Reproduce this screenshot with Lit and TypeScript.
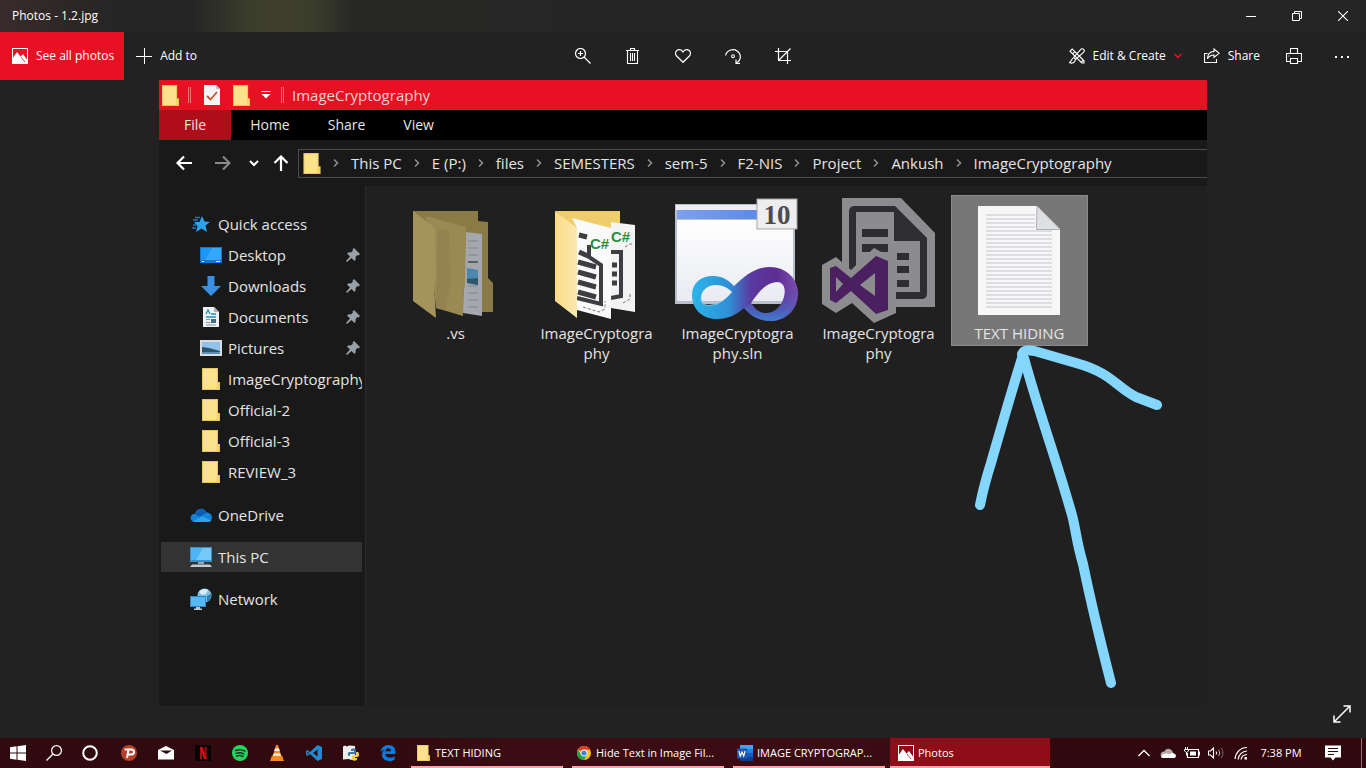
import { LitElement, html, css, svg, nothing, TemplateResult } from "lit";
import { customElement } from "lit/decorators.js";
import { classMap } from "lit/directives/class-map.js";

const icon = (w: number, h: number, body: unknown) =>
  html`<svg width=${w} height=${h} viewBox="0 0 ${w} ${h}" fill="none" aria-hidden="true">${body}</svg>`;

const line = (d: string, width = 1, color = "#fff") =>
  svg`<path d=${d} stroke=${color} stroke-width=${width} />`;

/* ---------- viewer glyphs ---------- */

const photosGlyph = icon(16, 16, svg`
  <rect x="0.5" y="0.5" width="15" height="15" stroke="#fff" />
  <path d="M0 11 L5 4 L8.5 8.5 L11 6 L16 13 V16 H0 Z" fill="#fff" />
  <path d="M9 9 L13 14" stroke="#e81123" stroke-width="0.8" />`);

const plusGlyph = icon(16, 16, line("M0 8.5H16M8.5 0V16", 1));

const zoomGlyph = icon(16, 16, svg`
  <circle cx="5.5" cy="5.5" r="5" stroke="#fff" stroke-width="1.2" />
  ${line("M3 5.5H8M5.5 3V8", 1.2)}${line("M9 9L15.5 15.5", 1.3)}`);

const trashGlyph = icon(16, 16, svg`
  ${line("M1 2.5H14M5.5 2.5V0.5H9.5V2.5M2.5 2.5V15.5H12.5V2.5M5.5 5V13M7.5 5V13M9.5 5V13", 1.1)}`);

const heartGlyph = icon(16, 16, svg`
  <path d="M8 14.3 L1.6 8 C-0.4 5.6 0.6 2.2 3.6 1.6 C5.6 1.3 7.2 2.4 8 4 C8.8 2.4 10.4 1.3 12.4 1.6 C15.4 2.2 16.4 5.6 14.4 8 Z" stroke="#fff" stroke-width="1.2" />`);

const rotateGlyph = icon(16, 16, svg`
  ${line("M0.6 7.5A7.4 7 0 1 1 11.5 14.8", 1.2)}
  ${line("M11 11.5V15.4H15", 1.2)}
  <circle cx="8" cy="8.2" r="1.4" stroke="#fff" stroke-width="1.1" />`);

const cropGlyph = icon(16, 16, svg`
  ${line("M0 3.5H12.5V16M3.5 0V12.5H16M4 12L15.5 0.5", 1.2)}`);

const editGlyph = icon(16, 16, svg`
  ${line("M1 3.2L3.2 1L15 12.8V15H12.8Z M3.6 5.8L5.8 3.6M12 14.5L14.5 12", 1.1)}
  ${line("M14.6 1.4C13.6 0.4 12.4 0.8 11.6 1.6L4.6 9.4L6.6 11.4L14.4 4.4C15.2 3.6 15.6 2.4 14.6 1.4Z", 1.1)}
  ${line("M4.4 10C2.6 10.2 2.6 13.6 0.4 14.6C3 15.8 6.2 14.6 6.2 11.8", 1.1)}`);

const caretGlyph = icon(8, 8, line("M0.5 2L4 5.5L7.5 2", 1.5, "#e81123"));

const shareGlyph = icon(16, 16, svg`
  ${line("M3.5 5.5H0.5V14.5H12.5V11", 1.1)}
  ${line("M10 1L15.2 5.2L10 9.4V7C7 7 5 8.2 3.4 10.8C3.6 6.6 6.2 3.6 10 3.4Z", 1.1)}`);

const printGlyph = icon(16, 16, svg`
  ${line("M4.5 5.5V0.5H11.5V5.5M4 13.5H0.5V5.5H15.5V13.5H12M4.5 10.5H11.5V15.5H4.5Z", 1.1)}
  <rect x="2.5" y="7.5" width="1" height="1" fill="#fff" />`);

const dotsGlyph = icon(16, 16, svg`
  <path d="M1 8h2v2H1zM7 8h2v2H7zM13 8h2v2h-2z" fill="#fff" />`);

const minGlyph = icon(10, 10, line("M0 5.5H10"));
const restoreGlyph = icon(10, 10, line("M0.5 2.5H7.5V9.5H0.5ZM2.5 2.5V0.5H9.5V7.5H7.5"));
const closeGlyph = icon(10, 10, line("M0 0L10 10M10 0L0 10", 1.1));
const expandGlyph = icon(18, 18, line("M1 17L17 1M10.5 1H17V7.5M1 10.5V17H7.5", 1.5));

/* ---------- explorer glyphs ---------- */

const folderGlyph = (w = 18, h = 22) => html`
  <svg width=${w} height=${h} viewBox="0 0 18 22" aria-hidden="true">
    <path d="M0 0H16V14H18V22H0Z" fill="#e9c45a" />
    <path d="M1 1H15V21H1Z" fill="#fde28d" />
    <path d="M15 15H17V21H14Z" fill="#f5d573" />
  </svg>`;

const checkDocGlyph = icon(16, 20, svg`
  <path d="M0 0H12L16 4V20H0Z" fill="#f4f4f6" /><path d="M12 0V4H16Z" fill="#b9b9c2" />
  <path d="M3 11L6.500 14.500L13 7" stroke="#c4552d" stroke-width="1.800" />`);

const menuMarkGlyph = icon(10, 8, svg`<path d="M0.500 0.500H9.500" stroke="#fff" /><path d="M0.500 3H9.500L5 7.500Z" fill="#fff" />`);
const backGlyph = icon(16, 16, line("M16 8H1.500M8 1.500L1.500 8L8 14.500", 2.2));
const forwardGlyph = icon(16, 16, line("M0 8H14.500M8 1.500L14.500 8L8 14.500", 2, "#8b8b8b"));
const downGlyph = icon(10, 8, line("M1 2L5 6L9 2", 2));
const upGlyph = icon(16, 16, line("M8 16V1.500M1.500 8L8 1.500L14.500 8", 2.2));
const crumbGlyph = icon(6, 10, line("M1 1.500L4.500 5L1 8.500", 1.600, "#8d8d8d"));

const starGlyph = icon(22, 20, svg`
  <path d="M12 2L14.500 7.500L20 8L15.500 11.500L17 18L11.500 14.500L6 18L7.500 12L4 8H9.500Z" fill="#2fa4ee" />
  <path d="M5 3.500H10M3 6H8M2 14H6M3 11H7" stroke="#1c79b9" stroke-width="1.300" />`);
const desktopGlyph = icon(22, 16, svg`
  <rect width="22" height="16" fill="#1277cf" /><rect x="1" y="1" width="20" height="12" fill="#1a97f6" />
  <path d="M12 1H21V13H5Z" fill="#36a7fa" /><path d="M2 14.500H4M16 14.500H20" stroke="#e6f4ff" />`);
const downloadsGlyph = icon(20, 20, svg`
  <path d="M6.500 0H13.500V10H20L10 20L0 10H6.500Z" fill="#3a8fe0" />`);
const documentsGlyph = icon(16, 20, svg`
  <path d="M0 0H11L16 5V20H0Z" fill="#eef2f4" /><path d="M11 0V5H16Z" fill="#a9b3b8" />
  <path d="M3 7L5 3L7 7M8 7H13M3 10H13" stroke="#2391b8" stroke-width="1.300" />
  <rect x="8" y="12" width="5" height="4" fill="#3d6f8c" /><path d="M3 12.500H7M3 15.500H7M3 18H13" stroke="#8497a1" />`);
const picturesGlyph = icon(22, 16, svg`
  <rect width="22" height="16" fill="#d9dde0" /><rect x="2" y="2" width="18" height="12" fill="#8fc3ee" />
  <path d="M2 7L9 8L20 11V14H2Z" fill="#2c5568" /><path d="M2 12H20V14H2Z" fill="#5f8fb4" />`);
const onedriveGlyph = icon(22, 14, svg`
  <path d="M5 14C1 14-0.500 10 1.500 7.500C2.500 6 4 5.800 5 6C6 1 13-2 16.500 4.500C20 4.500 22 7 22 9.500C22 12 20 14 18 14Z" fill="#1583d8" />
  <path d="M5 6C6.500 1 13-1.500 16.500 4.500L10 9Z" fill="#0b5db4" />
  <path d="M3 13.500L12 8L21 12.500C20 13.600 19 14 18 14H5Z" fill="#2ba3ea" />`);
const pcGlyph = icon(22, 20, svg`
  <rect y="0" width="22" height="15" fill="#3e8fc6" /><rect x="1" y="1" width="20" height="12" fill="#4ab5f8" />
  <path d="M13 1H21V13H6Z" fill="#74c9fb" /><path d="M8 15H14V17H8Z" fill="#8fa6b3" /><path d="M2 17.500H20L22 20H0Z" fill="#c2cdd3" />`);
const networkGlyph = icon(22, 22, svg`
  <circle cx="14.500" cy="7.500" r="7" fill="#7fbfe0" /><path d="M9 4C11 1 16 0 18 2L16 6L12 7Z" fill="#d6edf7" />
  <path d="M17 8L21 6C21 11 19 13 17 14Z" fill="#2f7aa8" />
  <rect y="8" width="16" height="11" fill="#2c84c4" /><rect x="1" y="9" width="14" height="9" fill="#56b9f5" />
  <path d="M6 19H10V20.500H12V22H4V20.500H6Z" fill="#b8c6ce" />`);
const pinGlyph = icon(14, 14, svg`
  <path d="M8 0L14 6L12.500 7.500L11.500 7L9.500 9C10 10.500 9.500 12 8.500 13L5.500 10L1 14L0 13L4 8.500L1 5.500C2 4.500 3.500 4 5 4.500L7 2.500L6.500 1.500Z" fill="#9aa1a6" />`);

/* ---------- large file icons ---------- */

const vsFolder = icon(128, 128, svg`
  <path d="M21 16H86V26L96 27V83L101 88V117H70L40 60Z" fill="#8a7a45" />
  <path d="M74 37L90 39V121L71 118Z" fill="#a4a8ac" />
  <path d="M76 46H86M76 53H86M76 60H86M76 91H86M76 98H86M76 105H86M76 112H86" stroke="#7d8790" />
  <path d="M76 67H86" stroke="#3a4a52" stroke-width="1.500" />
  <path d="M75 73L86 75V90L75 88Z" fill="#4b88ab" /><path d="M75 84L86 83V90L75 88Z" fill="#2f566d" />
  <path d="M34 21L74 32L73 92L71 94V121L44 113Z" fill="#9b8953" />
  <path d="M46 33L57 36L58 90L53 115L44 113Z" fill="#948350" />
  <path d="M21 16L43 33L44 85L42 90L44 123L21 106Z" fill="#a4945c" />`);

const csFolder = icon(128, 128, svg`
  <defs><linearGradient id="flap"><stop stop-color="#fbdc86" /><stop offset="1" stop-color="#fce9b0" /></linearGradient></defs>
  <path d="M22 16H87V40H50Z" fill="#f0cd6b" />
  <path d="M78 27L102 30V117L78 113Z" fill="#f3f3f3" />
  <path d="M78 57H88V101L78 103" stroke="#3e3e42" stroke-width="4" />
  <path d="M79 70H84M79 79H84M79 88H84" stroke="#3e3e42" stroke-width="5" />
  <path d="M90 108L97 104V99M92 52L97 49H101" stroke="#777" stroke-dasharray="3 2" />
  <path d="M39 23L78 33V124L44 115V33Z" fill="#fafafa" />
  <path d="M46 40L54 42M46 57L55 61" stroke="#3e3e42" stroke-width="5" />
  <path d="M45 67L63 72M45 77L63 82M45 87L63 92M45 97L63 102" stroke="#3e3e42" stroke-width="5" />
  <path d="M44 103L68 109V70L56 62V50" stroke="#3e3e42" stroke-width="4" />
  <path d="M50 112L66 117L72 114V106" stroke="#777" stroke-dasharray="3 2" />
  <text x="57" y="54" class="cs">C#</text>
  <text x="78" y="47" class="cs">C#</text>
  <path d="M22 16L44 33V123L22 106Z" fill="url(#flap)" />`);

const slnIcon = icon(128, 128, svg`
  <defs>
    <linearGradient id="loop"><stop stop-color="#2cb5ea" /><stop offset="0.350" stop-color="#2f8fd6" />
      <stop offset="0.550" stop-color="#5a3aa0" /><stop offset="0.800" stop-color="#5e2d91" /><stop offset="1" stop-color="#7d4fb4" /></linearGradient>
    <linearGradient id="under" x1="0" y1="0" x2="0" y2="1"><stop stop-color="#5a3aa0" stop-opacity="0" /><stop offset="1" stop-color="#3f7fd0" /></linearGradient>
    <linearGradient id="bar"><stop stop-color="#7da0ee" /><stop offset="1" stop-color="#4f7fe8" /></linearGradient>
    <linearGradient id="pane" x1="0" y1="0" x2="0" y2="1"><stop stop-color="#fff" /><stop offset="1" stop-color="#e9ebf1" /></linearGradient>
  </defs>
  <rect x="1" y="9" width="120" height="100" fill="#b9bfca" />
  <rect x="2" y="10" width="118" height="5" fill="#eceef3" />
  <rect x="3" y="15" width="116" height="9" fill="url(#bar)" />
  <rect x="3" y="25" width="116" height="81" fill="url(#pane)" />
  <rect x="83" y="4" width="40" height="30" fill="#eeeeef" stroke="#a5a5a8" />
  <text x="103" y="29" class="ten">10</text>
  <path fill-rule="evenodd" fill="url(#loop)" d="M18 100C18 88 27 81 39 81C50 81 56 87 60 91C70 82 80 72 96 72C112 72 124 84 124 98C124 115 112 126 97 126C84 126 76 120 70 113C62 120 54 124 43 124C28 124 18 114 18 100Z
    M27 103C27 110 32 111 38 110C46 109 53 103 58 97C54 93 49 90 42 90C33 90 27 96 27 103Z
    M77 108C80 112 83 117 90 118C100 119 107 112 110 102C112 94 110 88 104 87C92 87 84 98 77 108Z" />
  <path d="M70 113L77 108C80 112 83 117 90 118C100 119 107 112 110 102L112 92L122 88C128 108 114 126 97 126C84 126 76 120 70 113Z" fill="url(#under)" />
  <path d="M27 103C27 110 32 111 38 110C42 110 45 108 48 106" stroke="#7fd0f2" stroke-width="1" />`);

const vsFile = icon(128, 128, svg`
  <path d="M27 3H86L120 38V112H60L27 80Z" fill="#8c8c8e" />
  <path d="M40 11H80L112 43V98C112 102 110 104 106 104H79L34 76V17C34 13 36 11 40 11Z" fill="#2e2e30" />
  <path d="M41 17H79V46H105V97H79L41 76Z" fill="#8c8c8e" />
  <path d="M47 34H73V42H47ZM47 49H73V57H47ZM82 58H94V65H82ZM82 71H94V78H82ZM82 85H94V92H82Z" fill="#2e2e30" />
  <path d="M59 53L81 65V118L59 128L37 108L21 118L7 109V70L21 62L36 75Z" fill="#8c8c8e" />
  <path fill-rule="evenodd" fill="#4b2061" d="M15 73L21 71L36 83L61 61L73 66V115L61 119L36 96L21 108L15 105ZM21 82V97L28 89ZM60 78L45 90L60 101Z" />`);

const textFile = icon(128, 128, svg`
  <path d="M22 11H81L104 34V120H22Z" fill="#f7f7f8" />
  ${Array.from({ length: 24 }, (_, i) => {
    const y = 20 + i * 4;
    return y > 112 ? nothing : svg`<path d="M30 ${y}H${y < 36 ? 79 : 96}" stroke="#d3d6da" stroke-width="1.500" />`;
  })}
  <path d="M81 11L104 34.500H80.500Z" fill="#dfe0e2" stroke="#aeb0b3" />`);

/* ---------- taskbar glyphs ---------- */

const startGlyph = icon(16, 16, svg`<path d="M0 2.200L6.500 1.300V7.500H0ZM7.500 1.200L16 0V7.500H7.500ZM0 8.500H6.500V14.700L0 13.800ZM7.500 8.500H16V16L7.500 14.800Z" fill="#fff" />`);
const searchGlyph = icon(16, 16, svg`<circle cx="10.500" cy="5.500" r="4.900" stroke="#fff" stroke-width="1.200" />${line("M7 9L0.5 15.500", 1.3)}`);
const cortanaGlyph = icon(16, 16, svg`<circle cx="8" cy="8" r="6.800" stroke="#fff" stroke-width="2" />`);
const pGlyph = icon(16, 16, svg`<circle cx="8" cy="8" r="8" fill="#b5402a" /><path d="M3.500 4.500H10.500A2.300 2.300 0 0 1 10.500 9.500H7M7.500 4.500L6 13" stroke="#fff" stroke-width="2" />`);
const mailGlyph = icon(16, 16, svg`<path d="M0 5L8 1L16 5V14.500H0Z" fill="#fff" /><path d="M2 5.500H14L8.500 9Z" fill="#300a0f" />`);
const netflixGlyph = icon(16, 16, svg`<rect width="16" height="16" fill="#060606" /><path d="M6 2V14M10.500 2V14" stroke="#b00710" stroke-width="2" /><path d="M5 2H7.500L11.500 14H9Z" fill="#e50914" />`);
const spotifyGlyph = icon(16, 16, svg`<circle cx="8" cy="8" r="8" fill="#1ed760" /><path d="M3.500 5.500C7 4.300 10.500 4.800 13 6.200M4 8.300C7 7.400 9.800 7.800 12 9M4.500 11C7 10.200 9 10.500 11 11.500" stroke="#16301d" stroke-width="1.400" stroke-linecap="round" />`);
const vlcGlyph = icon(16, 16, svg`<path d="M3 10.500H13L15 16H1Z" fill="#f58a1f" /><path d="M7 0H9L12.500 12H3.500Z" fill="#f58a1f" /><path d="M6 3.500H10L10.800 6H5.200ZM4.600 8.500H11.400L12 10.800H4Z" fill="#f2f2f2" />`);
const codeGlyph = icon(16, 16, svg`<path d="M11.500 0L16 2V14L11.500 16L4 9L1.500 11L0 10V6L1.500 5L4 7Z" fill="#1f8ad2" /><path d="M11.500 4.500V11.500L7 8ZM1.500 6.500V9.500L3 8Z" fill="#300a0f" />`);
const pythonGlyph = icon(16, 16, svg`<path d="M0 1.500L2 0.500L4 1.500L6 0.500L12 1V15L10 14L8 15L6 14L0 14.500Z" fill="#ededed" /><path d="M6 6H11V7H6C4.500 7 4.500 11 6 11H7V9H11C12.500 9 13 8 13 6V4.500C13 3 8 3 8 4.500V6" fill="#3b77a8" /><path d="M13 7H14.500C16.500 7 16.500 12 14.500 12H11.500V13H14V14.500C14 16 9 16 9 14.500V11.500C9 10.500 10 10 11 10H12.500C13 10 13 9 13 7Z" fill="#f6cf46" />`);
const edgeGlyph = icon(16, 16, svg`<path d="M0.500 7.500C1 3 4 0 8.500 0C13 0 15.500 3.200 15.500 7V9H5.300C5.500 11.500 7.500 12.700 10 12.700C12 12.700 13.500 12.200 14.600 11.500V14.800C13 15.700 11.300 16 9.300 16C5 16 2 13.500 2 9.800C2 7.500 3.200 5.600 5 4.600C3 5 1.500 6 0.500 7.500ZM5.400 6.200H11C11 4.300 10 3.200 8.300 3.200C6.700 3.200 5.600 4.500 5.400 6.200Z" fill="#0a7be0" />`);
const chromeGlyph = icon(16, 16, svg`<circle cx="8" cy="8" r="7" fill="#fbc116" /><path d="M8 8L2 4.300A7 7 0 0 1 14.200 4.800H8Z" fill="#e33b2e" /><path d="M8 8L8 15A7 7 0 0 1 1.900 4.500L5 9.700Z" fill="#1fa34f" /><path d="M11 9.500L8 15L7.500 15L6 10.500Z" fill="#1fa34f" /><circle cx="8" cy="8" r="3.400" fill="#fff" /><circle cx="8" cy="8" r="2.600" fill="#3f82ee" />`);
const wordGlyph = icon(16, 16, svg`<rect x="3" width="13" height="16" rx="1" fill="#2b7cd3" /><rect x="3" width="13" height="4" fill="#41a5ee" /><rect x="3" y="8" width="13" height="4" fill="#185abd" /><rect x="3" y="12" width="13" height="4" fill="#103f91" /><rect y="3.500" width="10" height="10" fill="#1d55b4" /><path d="M1.800 6L3.300 11L5 7L6.700 11L8.200 6" stroke="#fff" stroke-width="1.200" />`);
const chevronUpGlyph = icon(12, 8, line("M0.5 7L6 1.500L11.500 7", 1.3));
const cloudGlyph = icon(16, 12, svg`<path d="M4 11H13C16.500 11 17 7 13.500 6.500C12 1 6 0 4.500 4.500C0 4 -1 10.500 4 11Z" fill="#b9a9ab" /><path d="M3.500 11H13C16.500 11 17 7.500 13.500 6.500C11 6 10 7 9 7.500C6 5 1.500 7.500 1 10C1.500 10.700 2.500 11 3.500 11Z" fill="#fff" />`);
const batteryGlyph = icon(16, 12, svg`${line("M5 2.500H14.500V10.500H3.500V6M14.500 5H15.500V8H14.500", 1.1)}<rect x="6" y="4.500" width="6" height="4" fill="#fff" />${line("M1.500 0V2M3.500 0V2M0.500 2.500H4.500V4L2.500 5.500L0.500 4V2.500M2.500 5V8.500", 1)}`);
const volumeGlyph = icon(16, 12, svg`${line("M0.5 4V8H2.500L5.500 11V1L2.500 4Z", 1.1)}${line("M8 4.500C8.800 5.400 8.800 6.600 8 7.500", 1.1)}${line("M10.5 3C12 4.800 12 7.200 10.500 9", 1, "#cbbcbd")}${line("M13 1C15.500 4 15.500 8 13 11", 1, "#88686c")}`);
const wifiGlyph = icon(14, 14, svg`${line("M1 13C1.500 6.500 6.500 1.500 13 1.500", 1.2)}${line("M4 13.500C4.500 9 8 5.200 13 5", 1.2)}${line("M7 13.500C7.500 10.500 9.500 8.700 13 8.500", 1.2)}<rect x="10.500" y="11" width="2.500" height="2.500" fill="#fff" />`);
const noticeGlyph = icon(16, 16, svg`<path d="M0 0.500H16V12.500H10.500L8 15.500L5.500 12.500H0Z" fill="#fff" /><path d="M3 3.500H13M3 6.500H13M3 9.500H9" stroke="#300a0f" />`);

interface Place { label: string; glyph: TemplateResult; pinned?: boolean; child?: boolean; current?: boolean }
interface FileItem { lines: string[]; art: TemplateResult; selected?: boolean }

const quickAccess: Place[] = [
  { label: "Quick access", glyph: starGlyph },
  { label: "Desktop", glyph: desktopGlyph, pinned: true, child: true },
  { label: "Downloads", glyph: downloadsGlyph, pinned: true, child: true },
  { label: "Documents", glyph: documentsGlyph, pinned: true, child: true },
  { label: "Pictures", glyph: picturesGlyph, pinned: true, child: true },
  { label: "ImageCryptography", glyph: folderGlyph(), child: true },
  { label: "Official-2", glyph: folderGlyph(), child: true },
  { label: "Official-3", glyph: folderGlyph(), child: true },
  { label: "REVIEW_3", glyph: folderGlyph(), child: true },
];

const roots: Place[] = [
  { label: "OneDrive", glyph: onedriveGlyph },
  { label: "This PC", glyph: pcGlyph, current: true },
  { label: "Network", glyph: networkGlyph },
];

const crumbs = ["This PC", "E (P:)", "files", "SEMESTERS", "sem-5", "F2-NIS", "Project", "Ankush", "ImageCryptography"];

const files: FileItem[] = [
  { lines: [".vs"], art: vsFolder },
  { lines: ["ImageCryptogra", "phy"], art: csFolder },
  { lines: ["ImageCryptogra", "phy.sln"], art: slnIcon },
  { lines: ["ImageCryptogra", "phy"], art: vsFile },
  { lines: ["TEXT HIDING"], art: textFile, selected: true },
];

@customElement("explorer-shot")
class ExplorerShot extends LitElement {
  static styles = css`
    :host { display: block; position: relative; background: #202020; color: #e4e4e4; font: 15px/20px "Open Sans", "Noto Sans", sans-serif; }
    button { border: 0; padding: 0; margin: 0; background: none; color: inherit; font: inherit; white-space: nowrap; }
    a { color: inherit; text-decoration: none; }
    svg { display: block; flex: none; }
    .title { display: flex; align-items: center; height: 30px; padding-left: 3px; background: #e81123; color: #f7cfd2; }
    .title .rule { width: 1px; height: 16px; border: solid #f0747d; border-width: 0 1px; margin: 0 13px 0 9px; }
    .title .rule.end { margin: 0 8px 0 10px; }
    .title .folder { margin: 0 11px 0 13px; }
    .tabs { display: flex; height: 30px; background: #000; font-size: 14px; }
    .tabs button { padding: 0 19px; }
    .tabs .file { padding: 0 25px; background: #b00d1b; }
    .nav { display: flex; align-items: center; height: 46px; padding-left: 6px; background: #191919; }
    .nav > button { display: grid; place-items: center; height: 30px; width: 38px; margin-right: 1px; }
    .nav > .slim { width: 21px; }
    .nav > .up { width: 32px; }
    .path { flex: 1; min-width: 0; display: flex; align-items: center; gap: 12px; height: 27px; padding-left: 4px; overflow: hidden; border: 1px solid #4c4c4c; border-right: 0; }
    .body { display: flex; min-height: 520px; }
    .side { flex: none; box-sizing: border-box; width: 207px; padding: 22px 3px 0 2px; display: flex; flex-direction: column; gap: 12px; background: #191919; border-right: 1px solid #2b2b2b; }
    .group { display: flex; flex-direction: column; padding-bottom: 1px; }
    .row { display: flex; align-items: center; height: 30px; padding-left: 29px; gap: 6px; white-space: nowrap; }
    .group .row { height: 31px; }
    .row.child { padding-left: 39px; }
    .row.current { background: #333; }
    .slot { display: grid; place-items: center; width: 22px; flex: none; }
    .name { flex: 1; min-width: 0; overflow: hidden; }
    .row .pin { margin-right: 2px; }
    .files { flex: 1; display: flex; flex-wrap: wrap; align-items: flex-start; align-content: flex-start; gap: 4px; padding: 9px 0 0 21px; }
    .item { display: flex; flex-direction: column; align-items: center; width: 137px; height: 151px; }
    .item.selected { background: #777; box-shadow: inset 0 0 0 1px #8a8a8a; }
    .cs { font: 700 15px "Liberation Sans", sans-serif; fill: #2c8f3d; }
    .ten { font: 700 27px "Liberation Serif", serif; fill: #4c4c50; text-anchor: middle; }
    .ink { position: absolute; inset: 0; pointer-events: none; }
  `;

  private place = (p: Place) => html`
    <a href="#" class=${classMap({ row: true, child: !!p.child, current: !!p.current })}>
      <span class="slot">${p.glyph}</span><span class="name">${p.label}</span>
      ${p.pinned ? html`<span class="pin">${pinGlyph}</span>` : nothing}
    </a>`;

  render() {
    return html`
      <div class="title">
        ${folderGlyph(17, 21)}<span class="rule"></span>${checkDocGlyph}
        <span class="folder">${folderGlyph(17, 21)}</span>${menuMarkGlyph}
        <span class="rule end"></span><span>ImageCryptography</span>
      </div>
      <div class="tabs">
        <button class="file">File</button><button>Home</button><button>Share</button><button>View</button>
      </div>
      <div class="nav">
        <button aria-label="Back">${backGlyph}</button>
        <button aria-label="Forward">${forwardGlyph}</button>
        <button class="slim" aria-label="Recent locations">${downGlyph}</button>
        <button class="up" aria-label="Up">${upGlyph}</button>
        <div class="path">
          ${folderGlyph(18, 21)}
          ${crumbs.map((c) => html`${crumbGlyph}<button>${c}</button>`)}
        </div>
      </div>
      <div class="body">
        <nav class="side">
          <div class="group">${quickAccess.map(this.place)}</div>
          ${roots.map(this.place)}
        </nav>
        <div class="files">
          ${files.map((f) => html`
            <button class=${classMap({ item: true, selected: !!f.selected })}>
              ${f.art}<span>${f.lines.map((l, i) => (i ? html`<br />${l}` : l))}</span>
            </button>`)}
        </div>
      </div>
      <svg class="ink" width="1048" height="626" viewBox="159 80 1048 626" fill="none" stroke="#84d6fd" stroke-width="10" stroke-linecap="round" stroke-linejoin="round" aria-hidden="true">
        <path d="M1023 355C1010 396 1002 425 991 463C985 482 983 490 980 505" />
        <path d="M1024 358C1038 410 1055 455 1072 515C1076 530 1076 540 1083 564C1090 598 1100 640 1111 683" />
        <path d="M1022 354C1024 349 1030 350 1038 352L1076 363C1112 373 1116 387 1136 397L1157 405" />
      </svg>`;
  }
}

@customElement("task-bar")
class TaskBar extends LitElement {
  static styles = css`
    :host { display: flex; height: 30px; background: linear-gradient(90deg, #300a0f 0, #300a0f 28%, #3b0c13 38%, #3b0c13 62%, #30080d 80%); color: #fff; font: 12px/16px "Open Sans", "Noto Sans", sans-serif; }
    button { border: 0; padding: 0; margin: 0; background: none; color: inherit; font: inherit; display: grid; place-items: center; white-space: nowrap; }
    svg { display: block; flex: none; }
    .system, .apps, .tasks, .tray { display: flex; }
    .system button, .apps button { width: 36px; }
    .apps { gap: 1px; margin: 0 1px 0 3px; }
    .tasks { gap: 1px; flex: 0 1 643px; min-width: 0; }
    .task { flex: 1; min-width: 0; display: flex; align-items: center; gap: 4px; padding: 0 8px; position: relative; text-align: left; font-size: 11px; }
    .task::after { content: ""; position: absolute; inset: auto 4px 0; height: 2px; background: #ffa3ab; }
    .task.active { background: #8f0d18; }
    .task.active::after { inset: auto 0 0; }
    .task .glyph { width: 16px; display: grid; place-items: center; flex: none; }
    .task .label { overflow: hidden; text-overflow: ellipsis; }
    .tray { margin-left: auto; }
    .tray button { width: 24px; }
    .tray .wifi { margin-left: 1px; }
    .tray .clock { width: 56px; font-size: 11px; }
    .tray .notice { width: 48px; margin-right: 4px; }
    .tray .peek { width: 5px; border-left: 1px solid #8b6f72; }
  `;

  render() {
    const apps: [string, TemplateResult][] = [
      ["PowerISO", pGlyph], ["Mail", mailGlyph], ["Netflix", netflixGlyph], ["Spotify", spotifyGlyph],
      ["VLC", vlcGlyph], ["Code", codeGlyph], ["Python", pythonGlyph], ["Edge", edgeGlyph],
    ];
    const tasks: [string, TemplateResult, boolean][] = [
      ["TEXT HIDING", folderGlyph(13, 16), false],
      ["Hide Text in Image Fil...", chromeGlyph, false],
      ["IMAGE CRYPTOGRAP...", wordGlyph, false],
      ["Photos", photosGlyph, true],
    ];
    return html`
      <div class="system">
        <button aria-label="Start">${startGlyph}</button>
        <button aria-label="Search">${searchGlyph}</button>
        <button aria-label="Cortana">${cortanaGlyph}</button>
      </div>
      <div class="apps">${apps.map(([n, g]) => html`<button aria-label=${n}>${g}</button>`)}</div>
      <div class="tasks">
        ${tasks.map(([n, g, on]) => html`<button class=${classMap({ task: true, active: on })}><span class="glyph">${g}</span><span class="label">${n}</span></button>`)}
      </div>
      <div class="tray">
        <button aria-label="Show hidden icons">${chevronUpGlyph}</button>
        <button aria-label="OneDrive">${cloudGlyph}</button>
        <button aria-label="Battery">${batteryGlyph}</button>
        <button aria-label="Volume">${volumeGlyph}</button>
        <button class="wifi" aria-label="Network">${wifiGlyph}</button>
        <button class="clock">7:38 PM</button>
        <button class="notice" aria-label="Notifications">${noticeGlyph}</button>
        <button class="peek" aria-label="Show desktop"></button>
      </div>`;
  }
}

@customElement("app-root")
class AppRoot extends LitElement {
  static styles = css`
    :host { display: flex; flex-direction: column; min-height: 100vh; background: #222; color: #fff; font: 12px/16px "Open Sans", "Noto Sans", sans-serif; }
    button { border: 0; padding: 0; margin: 0; background: none; color: inherit; font: inherit; white-space: nowrap; display: flex; align-items: center; justify-content: center; gap: 8px; }
    svg { display: block; flex: none; }
    .caption { display: flex; justify-content: space-between; align-items: center; height: 32px; padding-left: 12px;
      background: linear-gradient(90deg, #3a2b2b 0, #2c2726 5%, #252525 9%, #252525 14%, #34362a 17%, #3d3f2c 19%, #3d3f2c 22%, #34362a 24%, #262625 26%, #252525 100%); }
    .window { display: flex; height: 32px; }
    .window button { width: 46px; }
    .bar { display: grid; grid-template-columns: 1fr auto 1fr; height: 48px; }
    .left, .mid, .right { display: flex; }
    .right { justify-content: flex-end; }
    .left button, .right button { padding: 0 10px 0 12px; }
    .left .all { background: #e81123; }
    .mid { gap: 2px; }
    .mid button, .right .square { width: 48px; padding: 0; }
    .stage { flex: 1; position: relative; display: flex; justify-content: center; align-items: flex-start; padding-bottom: 32px; }
    .photo { flex: 0 1 1048px; min-width: 0; }
    .full { position: absolute; right: 0; bottom: 0; width: 48px; height: 48px; }
  `;

  render() {
    return html`
      <header class="caption">
        <span>Photos - 1.2.jpg</span>
        <div class="window">
          <button aria-label="Minimize">${minGlyph}</button>
          <button aria-label="Restore">${restoreGlyph}</button>
          <button aria-label="Close">${closeGlyph}</button>
        </div>
      </header>
      <div class="bar">
        <div class="left">
          <button class="all">${photosGlyph}<span>See all photos</span></button>
          <button>${plusGlyph}<span>Add to</span></button>
        </div>
        <div class="mid">
          <button aria-label="Zoom">${zoomGlyph}</button>
          <button aria-label="Delete">${trashGlyph}</button>
          <button aria-label="Add to favorites">${heartGlyph}</button>
          <button aria-label="Rotate">${rotateGlyph}</button>
          <button aria-label="Crop">${cropGlyph}</button>
        </div>
        <div class="right">
          <button>${editGlyph}<span>Edit &amp; Create</span>${caretGlyph}</button>
          <button>${shareGlyph}<span>Share</span></button>
          <button class="square" aria-label="Print">${printGlyph}</button>
          <button class="square" aria-label="See more">${dotsGlyph}</button>
        </div>
      </div>
      <main class="stage">
        <explorer-shot class="photo"></explorer-shot>
        <button class="full" aria-label="Full screen">${expandGlyph}</button>
      </main>
      <task-bar></task-bar>`;
  }
}
